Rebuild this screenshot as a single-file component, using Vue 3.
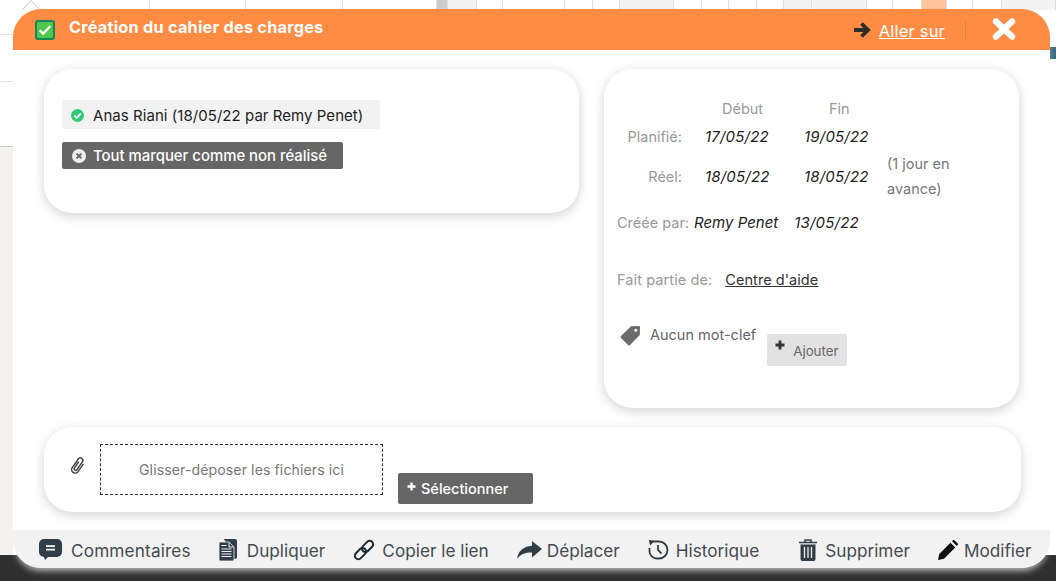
<script setup>
const cells = [
  [150, '#fff'], [96, '#fff'], [97, '#fff'], [94, '#fff'], [11, '#ccc'], [29, '#f3f3f3'], [26, '#fff'],
  [62, '#fff'], [28, '#fff'], [27, '#fff'], [54, '#f3f3f3'], [28, '#fff'], [27, '#fff'], [28, '#fff'],
  [27, '#fff'], [28, '#f3f3f3'], [55, '#f3f3f3'], [26, '#fff'], [29, '#fff'], [25, '#ffc39b'],
  [26, '#fff'], [29, '#fff'], [54, '#f3f3f3'],
]
</script>

<template>
  <div class="page">
    <div class="backdrop">
      <div class="strip">
        <span v-for="(c, i) in cells" :key="i" class="cell" :style="{ width: c[0] + 'px', background: c[1] }"></span>
      </div>
      <div class="left-grid"></div>
      <div class="left-bg"></div>
      <div class="dark"></div>
      <svg class="tri" width="20" height="10" viewBox="0 0 20 10"><path d="M1 10 10 .5 19 10" fill="#fff" stroke="#c4c4c4" stroke-width="1"/></svg>
      <div class="teal"></div>
    </div>

    <section class="modal">
      <header class="head">
        <span class="check">
          <svg width="14" height="12" viewBox="0 0 14 12"><path d="M1.6 6.2 5.2 9.6 12.4 2" fill="none" stroke="#fff" stroke-width="2.2"/></svg>
        </span>
        <h1 class="title">Création du cahier des charges</h1>
        <svg class="go-arrow" width="18" height="18" viewBox="0 0 18 18"><path d="M1 9h13.500M8.500 2.500 15 9 8.500 15.500" fill="none" stroke="#2d2d2d" stroke-width="3.800"/></svg>
        <a class="go-link">Aller sur</a>
        <span class="sep"></span>
        <svg class="close" width="24" height="22" viewBox="0 0 24 22"><path d="M4 3.500 20 18.500M20 3.500 4 18.500" stroke="#fff" stroke-width="6.500" stroke-linecap="round"/></svg>
      </header>

      <div class="body">
        <div class="columns">
          <div class="card card-left">
            <div class="chip">
              <svg width="13" height="13" viewBox="0 0 13 13"><circle cx="6.500" cy="6.500" r="6.500" fill="#2ecc71"/><path d="M3.300 6.600 5.600 8.800 9.800 4.500" fill="none" stroke="#fff" stroke-width="1.900"/></svg>
              <span>Anas Riani (18/05/22 par Remy Penet)</span>
            </div>
            <div class="undo">
              <svg width="14" height="14" viewBox="0 0 14 14"><circle cx="7" cy="7" r="7" fill="#eee"/><path d="M4.600 4.600 9.400 9.400M9.400 4.600 4.600 9.400" stroke="#666" stroke-width="2"/></svg>
              <span>Tout marquer comme non réalisé</span>
            </div>
          </div>

          <div class="card card-right">
            <div class="dates">
              <span></span><span class="hd">Début</span><span class="hd hd-end">Fin</span><span></span>
              <span class="lbl">Planifié:</span><em>17/05/22</em><em>19/05/22</em><span></span>
              <span class="lbl">Réel:</span><em>18/05/22</em><em>18/05/22</em><span class="note">(1 jour en avance)</span>
            </div>
            <div class="created">
              <span class="lbl">Créée par:</span><em class="by">Remy Penet</em><em>13/05/22</em>
            </div>
            <div class="part">
              <span class="lbl">Fait partie de:</span><a>Centre d'aide</a>
            </div>
            <div class="tags">
              <svg width="21" height="21" viewBox="0 0 21 21"><path d="M11 1.200 19 1a1 1 0 0 1 1 1l-.2 8L10 20a1.500 1.500 0 0 1-2 0L1 13a1.500 1.500 0 0 1 0-2z" fill="#6b6b6b"/><circle cx="15.800" cy="5.200" r="1.500" fill="#fff"/></svg>
              <span class="none">Aucun mot-clef</span>
              <button class="add">
                <svg width="10" height="10" viewBox="0 0 10 10"><path d="M5 .5v9M.5 5h9" stroke="#333" stroke-width="2.800"/></svg>
                <span>Ajouter</span>
              </button>
            </div>
          </div>
        </div>

        <div class="card card-files">
          <svg class="clip" width="20" height="21" viewBox="0 0 20 20"><path transform="rotate(35 10 10)" d="M13.500 5.500V15a3.500 3.500 0 0 1-7 0V4.500a2.500 2.500 0 0 1 5 0V14a1.500 1.500 0 0 1-3 0V6.500" fill="none" stroke="#444" stroke-width="1.500"/></svg>
          <div class="drop">Glisser-déposer les fichiers ici</div>
          <button class="select">
            <svg width="9" height="9" viewBox="0 0 9 9"><path d="M4.500 .5v8M.5 4.500h8" stroke="#fff" stroke-width="2.300"/></svg>
            <span>Sélectionner</span>
          </button>
        </div>
      </div>

      <footer class="foot">
        <span class="act g9 wide">
          <svg width="23" height="21" viewBox="0 0 23 21"><path d="M5 0h13a5 5 0 0 1 5 5v8a5 5 0 0 1-5 5H9l-3 3-1-3a5 5 0 0 1-5-5V5a5 5 0 0 1 5-5z" fill="#2f3e48"/><path d="M7 7.200h9M7 10.600h9" stroke="#fff" stroke-width="1.700"/></svg>
          Commentaires
        </span>
        <span class="act g10">
          <svg width="18" height="22" viewBox="0 0 18 22"><path d="M5 0h11a2 2 0 0 1 2 2v16a2 2 0 0 1-2 2h-1z" fill="#2f3e48"/><path d="M0 4.500A1.500 1.500 0 0 1 1.500 3H10l5 5v12.500a1.500 1.500 0 0 1-1.500 1.500h-12A1.500 1.500 0 0 1 0 20.500z" fill="#2f3e48" stroke="#f2f2f2" stroke-width=".8"/><path d="M10 3.500V8h4.500" fill="none" stroke="#f2f2f2" stroke-width="1"/><path d="M2.500 6.500h5M2.500 10h10M2.500 12.500h10M2.500 15h10M2.500 17.500h10" stroke="#f2f2f2" stroke-width="1.200"/></svg>
          Dupliquer
        </span>
        <span class="act g7">
          <svg width="22" height="22" viewBox="0 0 22 22"><g transform="rotate(-45 11 11)" fill="none" stroke="#1f2a30" stroke-width="2"><rect x="-.5" y="7.500" width="13" height="7" rx="3.500"/><rect x="9.500" y="7.500" width="13" height="7" rx="3.500"/></g></svg>
          Copier le lien
        </span>
        <span class="act g5">
          <svg width="25" height="18" viewBox="0 0 25 18"><path d="M15 0 25 8 15 16.500V11.500C8 11.500 3.500 13 0 18 1 10.500 6 5.200 15 4.800z" fill="#2f3e48"/></svg>
          Déplacer
        </span>
        <span class="act g7">
          <svg width="21" height="21" viewBox="0 0 21 21"><path d="M4.500 2.500H11a8.500 8.500 0 0 1 8.500 8.500 8.500 8.500 0 0 1-8.500 8.500H9a7.500 7.500 0 0 1-7.500-7.500V9" fill="none" stroke="#2f3e48" stroke-width="1.800"/><path d="M.8.800 6.500 2 2 6.500z" fill="#2f3e48"/><path d="M10 6v5l3.500 3.500" fill="none" stroke="#2f3e48" stroke-width="1.800"/></svg>
          Historique
        </span>
        <span class="act act-del g8">
          <svg width="18" height="22" viewBox="0 0 18 22"><path d="M0 3.500h18M6 3V1h6v2" fill="none" stroke="#2f3e48" stroke-width="1.500"/><path d="M1.500 5.500h15V20a2 2 0 0 1-2 2h-11a2 2 0 0 1-2-2z" fill="#2f3e48"/><path d="M5.500 8v11M9 8v11M12.500 8v11" stroke="#f2f2f2" stroke-width="1.300"/></svg>
          Supprimer
        </span>
        <span class="act g6">
          <svg width="20" height="20" viewBox="0 0 20 20"><path d="M0 20 1.200 14 12.500 2.700 17.300 7.500 6 18.800zM14 1.200 15 .3a1 1 0 0 1 1.400 0l3.300 3.300a1 1 0 0 1 0 1.400L18.800 6z" fill="#111"/></svg>
          Modifier
        </span>
      </footer>
    </section>
  </div>
</template>

<style scoped>
.page {
  position: relative;
  width: 1056px;
  height: 581px;
  overflow: hidden;
  background: #fff;
  font-family: Inter, "Noto Sans", sans-serif;
}
.backdrop { position: absolute; inset: 0; }
.strip { display: flex; height: 10px; }
.cell { flex: none; box-sizing: border-box; border-right: 1px solid #dedede; }
.left-grid { position: absolute; left: 0; top: 34px; width: 13px; height: 46px; border-top: 1px solid #e4e4e4; border-bottom: 1px solid #e4e4e4; }
.left-bg { position: absolute; left: 0; top: 146px; width: 13px; height: 409px; background: #f3f2ef; border-top: 1px solid #c8c8c8; }
.dark { position: absolute; left: 0; right: 0; bottom: 0; height: 26px; background: #2f2f2f; }
.tri { position: absolute; left: 21px; top: 0; }
.teal { position: absolute; left: 1047px; top: 47px; width: 9px; height: 12px; background: #3d6b84; }

.modal {
  position: absolute;
  left: 13px;
  top: 9px;
  width: 1037px;
  height: 559px;
  display: flex;
  flex-direction: column;
  background: #fff;
  border-radius: 28px;
  overflow: hidden;
  box-shadow: 0 5px 6px -2px rgba(255, 255, 255, .65);
}
.head {
  flex: none;
  height: 41px;
  display: flex;
  align-items: center;
  background: #ff8c42;
  padding-left: 22px;
  color: #fff;
}
.check {
  box-sizing: border-box;
  width: 20px;
  height: 20px;
  display: flex;
  align-items: center;
  justify-content: center;
  background: #4cc94c;
  border: 2px solid #17875a;
  border-radius: 3px;
  margin-right: 14px;
}
.title {
  margin: 0 0 6px;
  font-size: 16.300px;
  font-weight: 700;
  line-height: 22px;
  flex: 1;
  letter-spacing: .23px;
}
.go-link {
  margin-left: 8px;
  font-size: 16.500px;
  text-decoration: underline;
  line-height: 22px;
  letter-spacing: .2px;
  padding-top: 2px;
}
.sep { width: 1px; height: 20px; background: #d4864f; margin: 0 26px 0 20px; }
.close { margin-right: 34px; margin-top: -2px; }

.body {
  flex: 1;
  padding: 19px 29px 18px 31px;
  display: flex;
  flex-direction: column;
  justify-content: space-between;
}
.columns { display: flex; align-items: flex-start; gap: 25px; padding-right: 2px; }
.card {
  box-sizing: border-box;
  background: #fff;
  border-radius: 28px;
  box-shadow: 0 3px 12px rgba(0, 0, 0, .18);
}
.card-left { flex: none; width: 535px; height: 144px; padding: 31px 18px; }
.chip {
  display: flex;
  align-items: center;
  gap: 9px;
  width: 318px;
  height: 29px;
  box-sizing: border-box;
  padding: 1px 0 0 9px;
  background: #f2f2f2;
  border-radius: 2px;
  font-size: 15px;
  letter-spacing: .05px;
  color: #222;
}
.undo {
  display: flex;
  align-items: center;
  gap: 7px;
  width: 281px;
  height: 27px;
  box-sizing: border-box;
  padding-left: 10px;
  margin-top: 13px;
  background: #666;
  border-radius: 2px;
  color: #fff;
  font-size: 14.900px;
  font-weight: 500;
}
.card-right { flex: none; width: 415px; height: 339px; padding: 28px 0 0 13px; font-size: 14.500px; color: #666; }
.dates {
  display: grid;
  grid-template-columns: 65px 99px 99px 85px;
  grid-template-rows: 22px 34px 46px;
  align-items: center;
}
.hd { color: #999; padding-left: 40px; }
.hd-end { padding-left: 48px; }
.lbl { color: #999; }
.dates .lbl { text-align: right; }
em { white-space: nowrap; color: #222; font-style: italic; font-size: 15px; letter-spacing: .2px; }
.dates em { padding-left: 23px; }
.note { line-height: 25px; color: #777; padding-left: 7px; }
.created { display: flex; align-items: center; margin-top: 14px; }
.by { margin: 0 16px 0 5px; letter-spacing: 0; }
.part { display: flex; align-items: center; margin-top: 39px; }
.part .lbl { letter-spacing: .1px; }
.part a { margin-left: 13px; color: #333; text-decoration: underline; letter-spacing: .05px; }
.tags { display: flex; align-items: flex-start; margin: 37px 0 0 3px; }
.none { margin: 0 11px 0 9px; color: #666; line-height: 20px; }
.add {
  display: flex;
  align-items: center;
  gap: 8px;
  box-sizing: border-box;
  width: 80px;
  height: 32px;
  padding: 0 0 0 8px;
  margin-top: 9px;
  border: 0;
  border-radius: 2px;
  background: #e2e2e2;
  color: #666;
  font: 13.300px Inter, sans-serif;
}
.add svg { margin-bottom: 11px; }
.add span { padding-top: 2px; }
.card-files {
  display: flex;
  align-items: flex-start;
  width: 977px;
  height: 85px;
  padding: 17px 0 0 24px;
}
.clip { margin: 11px 12px 0 0; flex: none; }
.drop {
  box-sizing: border-box;
  width: 283px;
  height: 51px;
  display: flex;
  align-items: center;
  justify-content: center;
  border: 1px dashed #333;
  color: #777;
  font-size: 14.100px;
  letter-spacing: .1px;
}
.select {
  display: flex;
  align-items: center;
  gap: 5px;
  box-sizing: border-box;
  width: 135px;
  height: 31px;
  padding: 0 0 0 9px;
  margin: 29px 0 0 15px;
  border: 0;
  border-radius: 2px;
  background: #666;
  color: #fff;
  font: 500 14.500px Inter, sans-serif;
}
.select svg { margin-bottom: 4px; }
.foot {
  flex: none;
  height: 38px;
  box-sizing: border-box;
  display: flex;
  align-items: center;
  gap: 28px;
  padding: 3px 0 0 26px;
  background: #f2f2f2;
  font-size: 17.200px;
  color: #434b50;
  white-space: nowrap;
}
.act { display: flex; align-items: center; }
.act svg { margin-top: -2px; }
.wide { letter-spacing: .15px; }
.g5 { gap: 5px; }
.g6 { gap: 6px; }
.g7 { gap: 7px; }
.g8 { gap: 8px; }
.g9 { gap: 9px; }
.g10 { gap: 10px; }
.act-del { margin-left: 12px; }
</style>
